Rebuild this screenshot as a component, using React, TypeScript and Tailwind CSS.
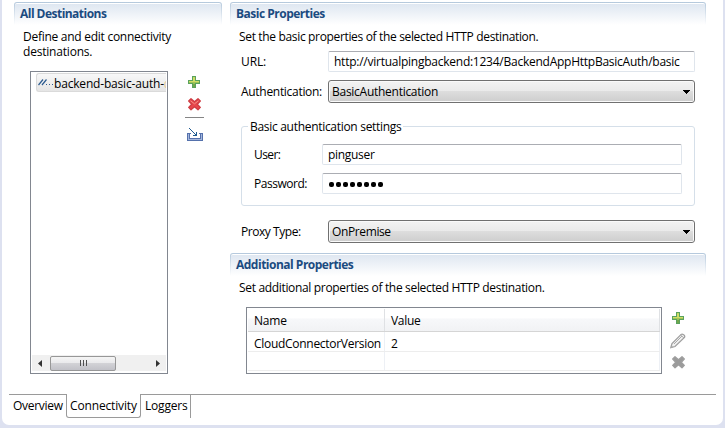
import React from 'react';

function SectionHeader({ title, tracking }: { title: string; tracking: string }) {
  return (
    <div className="h-[23px] shrink-0 rounded-t-[3px] bg-linear-to-b from-[#b4c8dc] to-white px-px pt-px">
      <div className="h-[22px] rounded-t-[2px] border-t border-white bg-linear-to-b from-[#dfe7f1] to-white pl-[5px] text-[12px] leading-[19px] font-bold text-[#1b4b80]">
        <span className={tracking}>{title}</span>
      </div>
    </div>
  );
}

function Plus() {
  return (
    <svg className="block h-[13px] w-[13px]" viewBox="0 0 13 13" shapeRendering="crispEdges">
      <defs>
        <linearGradient id="plusFill" x1="0" y1="0" x2="0" y2="1">
          <stop offset="0" stopColor="#c9dc62" />
          <stop offset="1" stopColor="#7fb04c" />
        </linearGradient>
      </defs>
      <path d="M4.500 .5h3v4h4v3h-4v4h-3v-4h-4v-3h4z" fill="url(#plusFill)" stroke="#5aa25e" />
      <path d="M5 8h2v3H5z" fill="#72a64b" />
      <path d="M5 2h2v3h4v1H1V5h4z" fill="#d0dd66" />
    </svg>
  );
}

function Cross({ muted }: { muted?: boolean }) {
  return (
    <svg className="block h-[13px] w-[13px]" viewBox="0 0 13 13">
      <path
        d="M3 .7 6.500 3.800 10 .7l2.300 2.300-3 3.200 3 3.200-2.300 2.300-3.500-3-3.500 3L.7 9.400l3-3.200-3-3.200z"
        fill={muted ? '#9b9b9b' : '#e8464b'}
        stroke={muted ? '#9e9e9e' : '#cf3d43'}
        strokeWidth="1.300"
        strokeLinejoin="round"
      />
      {!muted && <path d="m2.500 2.800 4 3 4-3" fill="none" stroke="#f48d83" />}
    </svg>
  );
}

function ImportIcon() {
  return (
    <svg className="block h-[14px] w-[16px]" viewBox="0 0 16 14" shapeRendering="crispEdges">
      <path d="M0 5h4v1H3v4h10V6h-1V5h4v8H0z" fill="#5571ac" />
      <path d="M1 6h1v5h12V6h1v6H1z" fill="#a3b6dc" />
      <path d="M2 0h1v1H2zM3 1h1v1H3zM4 2h1v1H4zM5 3h1v1H5zM6 4h1v1H6zM7 5h1v1H7zM9 4h1v4H6V7h2V6h1z" fill="#205b91" />
    </svg>
  );
}

function Pencil() {
  return (
    <svg className="block h-[16px] w-[16px]" viewBox="0 0 16 16">
      <path d="M.8 14.700 2 10.500 11.200 1.400c1-1 4.400.8 3.300 3L5 13.500z" fill="#f1f1f1" stroke="#a0a0a0" strokeWidth="1.300" />
      <path d="m4 11 8-8M1 14.500l2-.700M10.500 2l3.500 3" stroke="#aaa" fill="none" />
    </svg>
  );
}

function DestinationIcon() {
  return (
    <svg className="block h-[7px] w-[16px] shrink-0" viewBox="0 0 16 7">
      <path d="M1.500 6 6 .5M5 6 9.500 .5" stroke="#2d5c90" strokeWidth="1.200" />
      <path d="M9 5h1v1H9zM12 5h1v1h-1zM15 5h1v1h-1z" fill="#335e91" />
    </svg>
  );
}

function Field({ children, className }: { children: React.ReactNode; className: string }) {
  return (
    <div className={`h-[21px] rounded-[2px] border border-[#dfe5ec] border-t-[#abadb3] leading-[20px] ${className}`}>
      {children}
    </div>
  );
}

function Select({ children }: { children: React.ReactNode }) {
  return (
    <div className="h-[23px] w-[367px] rounded-[3px] border border-[#707070] bg-[#fafafa] p-px">
      <div className="flex h-[19px] items-center justify-between bg-[linear-gradient(to_bottom,#f2f2f2_0%,#eaeaea_48%,#dddddd_50%,#cfcfcf_100%)] pr-[3px] pl-[2px]">
        {children}
        <svg className="mt-px h-[4px] w-[7px]" viewBox="0 0 7 4" shapeRendering="crispEdges">
          <path d="M0 0h7v1H6v1H5v1H4v1H3V3H2V2H1V1H0z" fill="#000" />
        </svg>
      </div>
    </div>
  );
}

function DestinationList() {
  return (
    <div className="flex h-[303px] w-[138px] flex-col justify-between border border-[#828790] p-px">
      <div className="ml-[4px] flex h-[19px] items-center overflow-hidden rounded-l-[3px] border border-r-0 border-[#dadada] bg-linear-to-b from-[#f8f8f8] to-[#e5e5e5] whitespace-nowrap">
        <DestinationIcon />
        <span className="mt-px ml-px tracking-[-0.18px]">backend-basic-auth-</span>
        <span className="mt-px text-[#e3c797]">d</span>
      </div>
      <div className="mb-px flex h-[16px] items-center bg-[#f0f0f0]">
        <svg className="ml-[6px] h-[7px] w-[4px]" viewBox="0 0 4 7"><path d="M4 0v7L0 3.500z" fill="#333" /></svg>
        <div className="ml-[8px] flex h-[15px] w-[66px] items-center justify-center gap-[2px] rounded-[2px] border border-[#979797] bg-[linear-gradient(to_bottom,#f5f5f5_0%,#e9e9eb_48%,#d2d2d6_50%,#c2c2c8_100%)]">
          <i className="h-[6px] w-px bg-[#505050]" />
          <i className="h-[6px] w-px bg-[#505050]" />
          <i className="h-[6px] w-px bg-[#505050]" />
        </div>
        <svg className="ml-[40px] h-[7px] w-[4px]" viewBox="0 0 4 7"><path d="M0 0v7l4-3.500z" fill="#333" /></svg>
      </div>
    </div>
  );
}

export default function App() {
  return (
    <div className="h-[428px] w-[725px] overflow-hidden bg-[#dde1f0] pr-[2px] pl-[2px] font-['Open_Sans','Noto_Sans',sans-serif] text-[12px] leading-[15px] whitespace-nowrap text-black">
      <div className="flex h-[425px] w-[721px] flex-col rounded-b-[7px] bg-white pt-[2px]">
        <div className="flex h-[392px] gap-[8px] pl-[12px]">
          <section className="flex w-[208px] flex-col">
            <SectionHeader title="All Destinations" tracking="tracking-[-0.53px]" />
            <div className="mt-[4px] ml-[9px]">
              <p className="tracking-[-0.27px]">Define and edit connectivity</p>
              <p className="tracking-[-0.2px]">destinations.</p>
            </div>
            <div className="mt-[12px] ml-[16px] flex">
              <DestinationList />
              <div className="ml-[17px] flex w-[19px] flex-col items-center pt-[5px]">
                <Plus />
                <div className="mt-[9px]"><Cross /></div>
                <div className="mt-[6px] h-px w-[19px] bg-[#858585]" />
                <div className="mt-[10px]"><ImportIcon /></div>
              </div>
            </div>
          </section>

          <section className="flex w-[476px] flex-col">
            <SectionHeader title="Basic Properties" tracking="tracking-[-0.5px]" />
            <p className="mt-[4px] ml-[9px] tracking-[-0.34px]">Set the basic properties of the selected HTTP destination.</p>
            <div className="mt-[7px] ml-[11px] flex">
              <span className="w-[87px] leading-[21px] tracking-[-0.1px]">URL:</span>
              <Field className="w-[367px] pl-[5px]"><span className="tracking-[-0.25px]">http://virtualpingbackend:1234/BackendAppHttpBasicAuth/basic</span></Field>
            </div>
            <div className="mt-[8px] ml-[11px] flex">
              <span className="w-[87px] leading-[23px] tracking-[-0.3px]">Authentication:</span>
              <Select><span className="tracking-[-0.27px]">BasicAuthentication</span></Select>
            </div>
            <fieldset className="mt-[16px] ml-[11px] h-[87px] w-[454px] rounded-[3px] border border-[#d5dfe9]">
              <legend className="ml-[6px] px-[2px] tracking-[-0.3px]">Basic authentication settings</legend>
              <div className="mt-[10px] ml-[12px] flex h-[21px]">
                <span className="w-[68px] leading-[22px] tracking-[-0.6px]">User:</span>
                <Field className="w-[360px] pl-[5px]"><span className="tracking-[-0.3px]">pinguser</span></Field>
              </div>
              <div className="mt-[8px] ml-[12px] flex h-[21px]">
                <span className="w-[68px] leading-[22px] tracking-[-0.48px]">Password:</span>
                <Field className="flex w-[360px] items-center gap-[2px] pt-[2px] pl-[6px]">
                  {Array.from({ length: 8 }, (_, i) => (
                    <i key={i} className="h-[5px] w-[5px] rounded-[2px] bg-black" />
                  ))}
                </Field>
              </div>
            </fieldset>
            <div className="mt-[14px] ml-[11px] flex">
              <span className="w-[87px] leading-[23px] tracking-[-0.45px]">Proxy Type:</span>
              <Select><span className="tracking-[-0.38px]">OnPremise</span></Select>
            </div>
            <div className="mt-[10px]"><SectionHeader title="Additional Properties" tracking="tracking-[-0.5px]" /></div>
            <p className="mt-[4px] ml-[9px] tracking-[-0.33px]">Set additional properties of the selected HTTP destination.</p>
            <div className="mt-[12px] ml-[16px] flex">
              <div className="h-[67px] w-[416px] border border-[#828790] p-px">
                <div className="flex h-[23px] border-b border-[#d5d5d5] bg-[linear-gradient(to_bottom,#ffffff_0%,#ffffff_42%,#f7f8fa_44%,#f1f2f4_100%)] leading-[24px]">
                  <span className="w-[137px] border-r border-[#dfe1e4] pl-[6px] tracking-[-0.2px]">Name</span>
                  <span className="flex-1 border-r border-[#dfe1e4] pl-[6px] tracking-[-0.3px]">Value</span>
                </div>
                <div className="flex h-[20px] border-b border-[#ededed] leading-[23px]">
                  <span className="w-[137px] border-r border-[#edf0f5] pl-[6px] tracking-[-0.29px]">CloudConnectorVersion</span>
                  <span className="flex-1 border-r border-[#edf0f5] pl-[6px]">2</span>
                </div>
                <div className="flex h-[19px] border-b border-[#ededed]">
                  <span className="w-[137px] border-r border-[#edf0f5]" />
                  <span className="flex-1 border-r border-[#edf0f5]" />
                </div>
              </div>
              <div className="ml-[8px] flex w-[16px] flex-col items-center pt-[5px]">
                <Plus />
                <div className="mt-[8px]"><Pencil /></div>
                <div className="mt-[7px]"><Cross muted /></div>
              </div>
            </div>
          </section>
        </div>

        <nav className="ml-[7px] flex h-[24px] w-[707px] leading-[22px]">
          <div className="w-[57px] border-t border-[#9a9a9a] pl-[4px] tracking-[-0.3px]">Overview</div>
          <div className="w-[75px] rounded-b-[3px] border-x border-b border-[#9a9a9a] pt-px pl-[3px] tracking-[-0.15px]">Connectivity</div>
          <div className="w-[50px] border-t border-r border-[#9a9a9a] pl-[4px] tracking-[-0.2px]">Loggers</div>
          <div className="flex-1 border-t border-[#9a9a9a]" />
        </nav>
      </div>
    </div>
  );
}
